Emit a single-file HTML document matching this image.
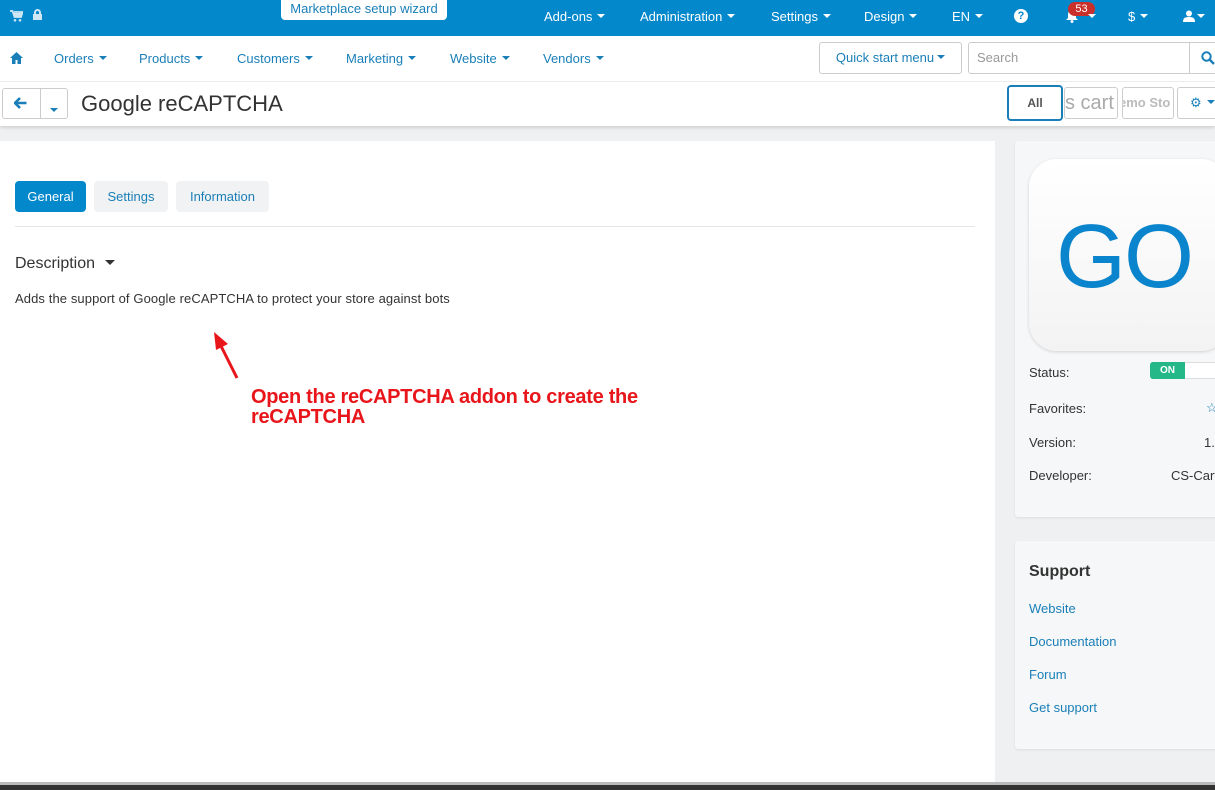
<!DOCTYPE html>
<html><head><meta charset="utf-8"><style>
*{margin:0;padding:0;box-sizing:border-box}
body{width:1215px;height:790px;overflow:hidden;background:#eef0f1;font-family:"Liberation Sans",Arial,sans-serif;position:relative;font-size:13px;color:#333}
.a{position:absolute;white-space:nowrap}
.top{left:0;top:0;width:1215px;height:36px;background:#0388cc}
.tw{color:#fff;font-size:13px;top:9px}
.car{display:inline-block;border-left:4px solid transparent;border-right:4px solid transparent;border-top:4px solid currentColor;vertical-align:middle;margin-left:5px;margin-top:-3px}
.nav{left:0;top:36px;width:1215px;height:46px;background:#fff;border-bottom:1px solid #eee}
.nl{color:#1a7fb8;top:51px;font-size:13px}
.hdr{left:0;top:82px;width:1215px;height:44px;background:#fff;box-shadow:0 2px 3px rgba(0,0,0,.12)}
.btn{border:1px solid #ccc;border-radius:3px;background:#fff}
.lnk{color:#1a7fb8;font-size:13px;left:1029px}
.lbl{font-size:13px;color:#333;left:1029px}
</style></head><body>
<div class="a top"></div>
<svg class="a" style="left:10px;top:10px" width="13" height="12" viewBox="0 0 13 12"><path d="M0 1h2.5l2 6h6.5l1.5-5H4" fill="none" stroke="#cfe6f4" stroke-width="1.8"/><rect x="4" y="3" width="7.5" height="3.5" fill="#cfe6f4"/><circle cx="5" cy="10.3" r="1.3" fill="#cfe6f4"/><circle cx="10" cy="10.3" r="1.3" fill="#cfe6f4"/></svg>
<div class="a" style="left:33px;top:9px;width:9px;height:11px"><div style="position:absolute;left:1px;top:0;width:7px;height:7px;border:2px solid #cfe6f4;border-radius:4px 4px 0 0;border-bottom:none"></div><div style="position:absolute;left:0;top:5px;width:9px;height:6px;background:#cfe6f4"></div></div>
<div class="a" style="left:281px;top:-4px;width:166px;height:24px;background:#fff;border-radius:4px;color:#1a7fb8;text-align:center;font-size:13px;line-height:22px;padding-top:2px">Marketplace setup wizard</div>
<div class="a tw" style="left:544px">Add-ons<span class="car"></span></div>
<div class="a tw" style="left:640px">Administration<span class="car"></span></div>
<div class="a tw" style="left:771px">Settings<span class="car"></span></div>
<div class="a tw" style="left:864px">Design<span class="car"></span></div>
<div class="a tw" style="left:952px">EN<span class="car"></span></div>
<div class="a" style="left:1014px;top:9px;width:14px;height:14px;border-radius:50%;background:#fff;color:#0388cc;font-size:11px;font-weight:bold;text-align:center;line-height:14px">?</div>
<svg class="a" style="left:1065px;top:9px" width="14" height="14" viewBox="0 0 14 14"><path d="M7 1c-3 0-4 2.5-4 5v3l-2 2h12l-2-2V6c0-2.5-1-5-4-5z" fill="#fff"/><circle cx="7" cy="12.5" r="1.5" fill="#fff"/></svg>
<div class="a" style="left:1068px;top:2px;width:27px;height:14px;border-radius:7px;background:#c9302c;color:#fff;font-size:11px;text-align:center;line-height:14px">53</div>
<div class="a tw" style="left:1083px"><span class="car"></span></div>
<div class="a tw" style="left:1128px">$<span class="car"></span></div>
<svg class="a" style="left:1183px;top:10px" width="12" height="12" viewBox="0 0 12 12"><circle cx="6" cy="3.5" r="3" fill="#fff"/><path d="M0 12c0-4 2-5 6-5s6 1 6 5z" fill="#fff"/></svg>
<div class="a tw" style="left:1192px"><span class="car"></span></div>
<div class="a nav"></div>
<svg class="a" style="left:10px;top:52px" width="13" height="12" viewBox="0 0 13 12"><path d="M6.5 0L0 6h2v6h3.5V8h2v4H11V6h2z" fill="#1a7fb8"/></svg>
<div class="a nl" style="left:54px">Orders<span class="car"></span></div>
<div class="a nl" style="left:139px">Products<span class="car"></span></div>
<div class="a nl" style="left:237px">Customers<span class="car"></span></div>
<div class="a nl" style="left:346px">Marketing<span class="car"></span></div>
<div class="a nl" style="left:450px">Website<span class="car"></span></div>
<div class="a nl" style="left:543px">Vendors<span class="car"></span></div>
<div class="a btn" style="left:819px;top:42px;width:143px;height:32px;color:#1a7fb8;font-size:13px;line-height:30px;text-align:center">Quick start menu<span class="car" style="margin-left:3px"></span></div>
<div class="a btn" style="left:968px;top:42px;width:252px;height:32px;color:#999;font-size:13px;line-height:30px;padding-left:8px">Search</div>
<div class="a" style="left:1189px;top:43px;width:1px;height:30px;background:#ccc"></div>
<svg class="a" style="left:1201px;top:51px" width="14" height="14" viewBox="0 0 14 14"><circle cx="5.5" cy="5.5" r="4.2" fill="none" stroke="#1a7fb8" stroke-width="2"/><path d="M8.5 8.5L13 13" stroke="#1a7fb8" stroke-width="2.4"/></svg>
<div class="a hdr"></div>
<div class="a btn" style="left:2px;top:88px;width:66px;height:31px"></div>
<div class="a" style="left:40px;top:88px;width:1px;height:31px;background:#ccc"></div>
<svg class="a" style="left:14px;top:97px" width="13" height="12" viewBox="0 0 13 12"><path d="M6 1L1 6l5 5M1.5 6H12.5" fill="none" stroke="#1a7fb8" stroke-width="2.6"/></svg>
<div class="a" style="left:50px;top:101px;color:#1a7fb8"><span class="car" style="margin:0"></span></div>
<div class="a" style="left:81px;top:91px;font-size:22px;color:#333">Google reCAPTCHA</div>
<div class="a" style="left:1007px;top:85px;width:56px;height:36px;border:2px solid #1a7fb8;border-radius:4px;background:#fff;text-align:center;line-height:32px;color:#555;font-size:12px;font-weight:bold">All</div>
<div class="a btn" style="left:1064px;top:87px;width:54px;height:32px;overflow:hidden;color:#aaa;font-size:20px;line-height:30px">s cart</div>
<div class="a btn" style="left:1122px;top:87px;width:52px;height:32px;overflow:hidden;color:#bbb;font-size:13px;font-weight:bold;line-height:30px;text-indent:-4px">emo Sto</div>
<div class="a btn" style="left:1177px;top:87px;width:50px;height:32px;color:#1a7fb8;line-height:30px;padding-left:12px">&#9881;<span class="car"></span></div>
<div class="a" style="left:0;top:141px;width:995px;height:641px;background:#fff"></div>
<div class="a" style="left:15px;top:181px;width:71px;height:31px;background:#0388cc;border-radius:4px;color:#fff;text-align:center;line-height:31px">General</div>
<div class="a" style="left:94px;top:181px;width:74px;height:31px;background:#f1f2f3;border-radius:4px;color:#1a7fb8;text-align:center;line-height:31px">Settings</div>
<div class="a" style="left:176px;top:181px;width:93px;height:31px;background:#f1f2f3;border-radius:4px;color:#1a7fb8;text-align:center;line-height:31px">Information</div>
<div class="a" style="left:15px;top:226px;width:960px;height:1px;background:#e4e6e8"></div>
<div class="a" style="left:15px;top:255px;font-size:16px;color:#333">Description<span class="car" style="margin-left:10px;border-width:5px 5px 0 5px"></span></div>
<div class="a" style="left:15px;top:291px;font-size:13px;color:#333;letter-spacing:0.1px">Adds the support of Google reCAPTCHA to protect your store against bots</div>
<svg class="a" style="left:208px;top:328px" width="35" height="55"><line x1="29" y1="50" x2="12" y2="16" stroke="#e8161b" stroke-width="3"/><polygon points="6,4 20,16 8,22" fill="#e8161b"/></svg>
<div class="a" style="left:251px;top:387px;color:#e8161b;font-weight:bold;font-size:20px;line-height:20px;letter-spacing:-0.3px">Open the reCAPTCHA addon to create the<br>reCAPTCHA</div>
<div class="a" style="left:1015px;top:141px;width:210px;height:376px;background:#f6f7f8;border-radius:3px;box-shadow:0 1px 2px rgba(0,0,0,.08)"></div>
<div class="a" style="left:1029px;top:159px;width:200px;height:192px;border-radius:28px;background:linear-gradient(#fff,#f3f3f3);box-shadow:0 1px 3px rgba(0,0,0,.15)"></div>
<div class="a" style="left:1056px;top:207px;font-size:90px;color:#0a84cc;line-height:100px;letter-spacing:-2px">GO</div>
<div class="lbl a" style="top:365px">Status:</div>
<div class="a" style="left:1150px;top:362px;width:70px;height:17px;border-radius:3px;background:#fff;border:1px solid #ddd"></div>
<div class="a" style="left:1150px;top:362px;width:35px;height:17px;border-radius:3px 0 0 3px;background:#24b889;color:#fff;font-size:10px;font-weight:bold;text-align:center;line-height:17px">ON</div>
<div class="lbl a" style="top:401px">Favorites:</div>
<div class="a" style="left:1206px;top:400px;color:#1a7fb8">&#9734;</div>
<div class="lbl a" style="top:435px">Version:</div>
<div class="a" style="left:1204px;top:435px">1.0</div>
<div class="lbl a" style="top:468px">Developer:</div>
<div class="a" style="left:1171px;top:468px">CS-Cart</div>
<div class="a" style="left:1015px;top:541px;width:210px;height:208px;background:#f6f7f8;border-radius:3px;box-shadow:0 1px 2px rgba(0,0,0,.08)"></div>
<div class="a" style="left:1029px;top:563px;font-size:16px;font-weight:bold;color:#333">Support</div>
<div class="lnk a" style="top:601px">Website</div>
<div class="lnk a" style="top:634px">Documentation</div>
<div class="lnk a" style="top:667px">Forum</div>
<div class="lnk a" style="top:700px">Get support</div>
<div class="a" style="left:0;top:782px;width:1215px;height:3px;background:#bbb"></div>
<div class="a" style="left:0;top:785px;width:1215px;height:5px;background:#333"></div>
</body></html>
